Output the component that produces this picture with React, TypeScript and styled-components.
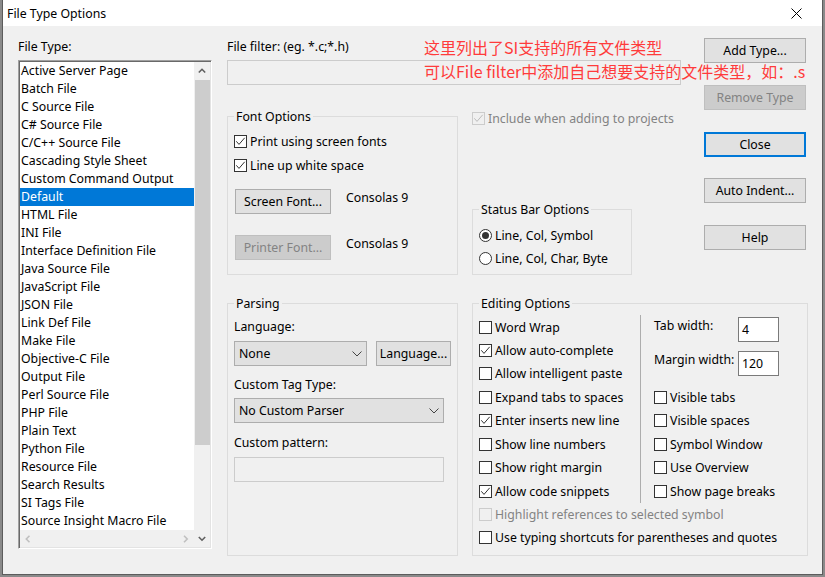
import React from "react";
import styled, {createGlobalStyle, css} from "styled-components";

const GlobalStyle = createGlobalStyle`
	html, body {
		margin: 0;
		padding: 0;
	}
	body {
		width: 825px;
		height: 577px;
		overflow: hidden;
		background: #8a8a8a;
		font-family: "Noto Sans", "Noto Sans CJK SC", sans-serif;
		font-size: 12.3px;
		line-height: 17px;
		color: #000;
	}
	* {
		box-sizing: border-box;
	}
`;

const fileTypes = [
	"Active Server Page",
	"Batch File",
	"C Source File",
	"C# Source File",
	"C/C++ Source File",
	"Cascading Style Sheet",
	"Custom Command Output",
	"Default",
	"HTML File",
	"INI File",
	"Interface Definition File",
	"Java Source File",
	"JavaScript File",
	"JSON File",
	"Link Def File",
	"Make File",
	"Objective-C File",
	"Output File",
	"Perl Source File",
	"PHP File",
	"Plain Text",
	"Python File",
	"Resource File",
	"Search Results",
	"SI Tags File",
	"Source Insight Macro File",
];

const Window = styled.div`
	position: relative;
	margin-left: 2px;
	width: 821px;
	height: 575px;
	background: #f0f0f0;
	border: 1px solid #5c5c5c;
	border-top: none;
	display: flex;
	flex-direction: column;
`;

const TitleBar = styled.div`
	height: 26px;
	flex: none;
	background: #fff;
	display: flex;
	align-items: center;
	justify-content: space-between;
	padding: 0 20px 0 4px;
`;

const Body = styled.div`
	display: flex;
	padding: 12px 0 0 15px;
`;

const Annotation = styled.div`
	position: absolute;
	left: 421px;
	top: 35px;
	font-family: "Noto Sans CJK SC", sans-serif;
	font-size: 16px;
	line-height: 24px;
	color: #ff3b3b;
	white-space: nowrap;
	pointer-events: none;
`;

const ListColumn = styled.div`
	width: 194px;
	flex: none;
	display: flex;
	flex-direction: column;
`;

const Label = styled.div<{$mt?: number}>`
	height: 17px;
	white-space: nowrap;
	margin-top: ${p => p.$mt ?? 0}px;
`;

const ListBox = styled.div`
	margin-top: 5px;
	height: 489px;
	border-top: 1px solid #a0a0a0;
	border-left: 1px solid #a0a0a0;
	border-right: 1px solid #fff;
	border-bottom: 1px solid #fff;
	padding: 1px;
	box-shadow: inset 1px 1px 0 #696969, inset -1px -1px 0 #e3e3e3;
	display: grid;
	grid-template-columns: 174px 16px;
	grid-template-rows: 468px 17px;
`;

const Items = styled.div`
	background: #fff;
	overflow: hidden;
`;

const Item = styled.div<{$selected?: boolean}>`
	height: 18px;
	line-height: 18px;
	padding-left: 1px;
	white-space: nowrap;
	background: ${p => (p.$selected ? "#0078d7" : "transparent")};
	color: ${p => (p.$selected ? "#fff" : "#000")};
`;

const VScroll = styled.div`
	grid-column: 2;
	grid-row: 1 / 3;
	background: #f0f0f0;
	display: flex;
	flex-direction: column;
`;

const ArrowCell = styled.div`
	height: 17px;
	flex: none;
	display: flex;
	align-items: center;
	justify-content: center;
`;

const Thumb = styled.div`
	margin: 1px 0 0 1px;
	height: 365px;
	background: #cdcdcd;
`;

const HScroll = styled.div`
	background: #f0f0f0;
	display: flex;
	justify-content: space-between;
	padding: 0 5px;
`;

const MainColumn = styled.div`
	margin-left: 15px;
	display: flex;
	flex-direction: column;
`;

const TopSection = styled.div`
	display: flex;
`;

const TopContent = styled.div`
	width: 477px;
	display: flex;
	flex-direction: column;
`;

const TextBox = styled.div<{$width: number; $disabled?: boolean; $mt?: number}>`
	width: ${p => p.$width}px;
	height: 25px;
	margin-top: ${p => p.$mt ?? 0}px;
	padding-left: 3px;
	display: flex;
	align-items: center;
	${p =>
		p.$disabled
			? css`
					background: #f0f0f0;
					border: 1px solid #cccccc;
			  `
			: css`
					background: #fff;
					border: 1px solid #7a7a7a;
			  `}
`;

const OptionsRow = styled.div`
	display: flex;
	margin-top: 23px;
`;

const Group = styled.fieldset<{$width: number; $pt: number; $pb: number}>`
	margin: 0;
	min-width: 0;
	width: ${p => p.$width}px;
	padding: ${p => p.$pt}px 6px ${p => p.$pb}px 6px;
	border: 1px solid #dcdcdc;
`;

const Legend = styled.legend`
	padding: 0 2px;
	height: 17px;
	line-height: 17px;
`;

const ColumnB = styled.div`
	margin-left: 14px;
	width: 232px;
	display: flex;
	flex-direction: column;
`;

const CheckRow = styled.div<{$h: number; $disabled?: boolean; $mt?: number}>`
	height: ${p => p.$h}px;
	margin-top: ${p => p.$mt ?? 0}px;
	display: flex;
	align-items: center;
	gap: 3px;
	white-space: nowrap;
	color: ${p => (p.$disabled ? "#838383" : "#000")};
`;

const Box = styled.span<{$disabled?: boolean}>`
	width: 13px;
	height: 13px;
	flex: none;
	border: 1px solid ${p => (p.$disabled ? "#cccccc" : "#333333")};
	background: ${p => (p.$disabled ? "#f0f0f0" : "#fff")};
	display: flex;
	align-items: center;
	justify-content: center;
`;

const RadioCircle = styled.span`
	width: 13px;
	height: 13px;
	flex: none;
	border: 1px solid #333;
	border-radius: 50%;
	background: #fff;
	display: flex;
	align-items: center;
	justify-content: center;
`;

const RadioDot = styled.span`
	width: 7px;
	height: 7px;
	border-radius: 50%;
	background: #333;
`;

const FontRow = styled.div<{$mt: number}>`
	display: flex;
	align-items: flex-start;
	gap: 15px;
	margin-top: ${p => p.$mt}px;
	padding-left: 1px;
`;

const Button = styled.div<{$width: number; $disabled?: boolean; $default?: boolean}>`
	width: ${p => p.$width}px;
	height: 25px;
	flex: none;
	display: flex;
	align-items: center;
	justify-content: center;
	white-space: nowrap;
	background: #e1e1e1;
	border: 1px solid #adadad;
	${p =>
		p.$disabled &&
		css`
			background: #cccccc;
			border-color: #bfbfbf;
			color: #838383;
		`}
	${p =>
		p.$default &&
		css`
			border: 2px solid #0078d7;
		`}
`;

const ButtonColumn = styled.div`
	width: 102px;
	display: flex;
	flex-direction: column;
	gap: 21.75px;
`;

const BottomSection = styled.div`
	display: flex;
	gap: 14px;
	margin-top: 19.5px;
`;

const SelectRow = styled.div<{$mt: number}>`
	display: flex;
	gap: 9px;
	margin-top: ${p => p.$mt}px;
`;

const Select = styled.div<{$width: number}>`
	width: ${p => p.$width}px;
	height: 25px;
	background: #e1e1e1;
	border: 1px solid #adadad;
	display: flex;
	align-items: center;
	justify-content: space-between;
	padding: 0 4px 0 4px;
	white-space: nowrap;
`;

const EditGrid = styled.div`
	display: grid;
	grid-template-columns: 161px 14px 147px;
	grid-template-rows: repeat(10, 23.44px);
`;

const Separator = styled.div`
	grid-column: 2;
	grid-row: 1 / 9;
	border-left: 1px solid #adadad;
`;

const Cell = styled.div<{$col: string; $row: string}>`
	grid-column: ${p => p.$col};
	grid-row: ${p => p.$row};
`;

const WidthFields = styled.div`
	grid-column: 3;
	grid-row: 1 / 4;
	display: flex;
	flex-direction: column;
	gap: 9px;
	padding-top: 1.7px;
`;

const FieldRow = styled.div`
	display: flex;
	align-items: flex-start;
`;

const FieldLabel = styled.span`
	width: 84px;
	white-space: nowrap;
`;

function Chevron({dir, color}: {dir: "up" | "down" | "left" | "right"; color: string}) {
	const pts = {
		up: "0.8,4.5 4,1.3 7.2,4.5",
		down: "0.8,1 4,4.2 7.2,1",
		left: "4.5,0.8 1.3,4 4.5,7.2",
		right: "1,0.8 4.2,4 1,7.2",
	}[dir];
	const horiz = dir === "left" || dir === "right";
	return (
		<svg width={horiz ? 6 : 8} height={horiz ? 8 : 6} viewBox={horiz ? "0 0 6 8" : "0 0 8 6"}>
			<polyline points={pts} fill="none" stroke={color} strokeWidth="1.6" />
		</svg>
	);
}

function DropArrow() {
	return (
		<svg width="10" height="6" viewBox="0 0 10 6">
			<polyline points="0.5,0.5 5,5 9.5,0.5" fill="none" stroke="#444" strokeWidth="1" />
		</svg>
	);
}

function CloseIcon() {
	return (
		<svg width="11" height="11" viewBox="0 0 11 11">
			<path d="M0.5 0.5 L10.5 10.5 M10.5 0.5 L0.5 10.5" stroke="#000" strokeWidth="1" />
		</svg>
	);
}

function Check({
	label,
	checked,
	disabled,
	h = 24,
	mt,
}: {
	label: string;
	checked?: boolean;
	disabled?: boolean;
	h?: number;
	mt?: number;
}) {
	return (
		<CheckRow $h={h} $disabled={disabled} $mt={mt}>
			<Box $disabled={disabled}>
				{checked && (
					<svg width="11" height="11" viewBox="0 0 11 11">
						<polyline
							points="1.3,5.3 4,8.4 9.7,1.8"
							fill="none"
							stroke={disabled ? "#bcbcbc" : "#333"}
							strokeWidth="1"
						/>
					</svg>
				)}
			</Box>
			<span>{label}</span>
		</CheckRow>
	);
}

function Radio({label, selected}: {label: string; selected?: boolean}) {
	return (
		<CheckRow $h={23}>
			<RadioCircle>{selected && <RadioDot />}</RadioCircle>
			<span>{label}</span>
		</CheckRow>
	);
}

const leftEdit: [string, boolean][] = [
	["Word Wrap", false],
	["Allow auto-complete", true],
	["Allow intelligent paste", false],
	["Expand tabs to spaces", false],
	["Enter inserts new line", true],
	["Show line numbers", false],
	["Show right margin", false],
	["Allow code snippets", true],
];

const rightEdit = ["Visible tabs", "Visible spaces", "Symbol Window", "Use Overview", "Show page breaks"];

export default function App() {
	return (
		<>
			<GlobalStyle />
			<Window>
				<TitleBar>
					<span>File Type Options</span>
					<CloseIcon />
				</TitleBar>
				<Body>
					<ListColumn>
						<Label>File Type:</Label>
						<ListBox>
							<Items>
								{fileTypes.map((t, i) => (
									<Item key={t} $selected={i === 7}>
										{t}
									</Item>
								))}
							</Items>
							<VScroll>
								<ArrowCell>
									<Chevron dir="up" color="#606060" />
								</ArrowCell>
								<Thumb />
								<div style={{flex: 1}} />
								<ArrowCell>
									<Chevron dir="down" color="#606060" />
								</ArrowCell>
							</VScroll>
							<HScroll>
								<ArrowCell>
									<Chevron dir="left" color="#c0c0c0" />
								</ArrowCell>
								<ArrowCell>
									<Chevron dir="right" color="#c0c0c0" />
								</ArrowCell>
							</HScroll>
						</ListBox>
					</ListColumn>

					<MainColumn>
						<TopSection>
							<TopContent>
								<Label>File filter: (eg. *.c;*.h)</Label>
								<TextBox $width={454} $disabled $mt={5} />
								<OptionsRow>
									<Group $width={231} $pt={4} $pb={14}>
										<Legend>Font Options</Legend>
										<Check label="Print using screen fonts" checked />
										<Check label="Line up white space" checked />
										<FontRow $mt={12}>
											<Button $width={96}>Screen Font...</Button>
											<span>Consolas 9</span>
										</FontRow>
										<FontRow $mt={21}>
											<Button $width={96} $disabled>
												Printer Font...
											</Button>
											<span>Consolas 9</span>
										</FontRow>
									</Group>
									<ColumnB>
										<Check label="Include when adding to projects" checked disabled h={20} />
										<Group $width={160} $pt={6} $pb={4.5} style={{marginTop: 72.5}}>
											<Legend>Status Bar Options</Legend>
											<Radio label="Line, Col, Symbol" selected />
											<Radio label="Line, Col, Char, Byte" />
										</Group>
									</ColumnB>
								</OptionsRow>
							</TopContent>
							<ButtonColumn>
								<Button $width={102}>Add Type...</Button>
								<Button $width={102} $disabled>
									Remove Type
								</Button>
								<Button $width={102} $default>
									Close
								</Button>
								<Button $width={102}>Auto Indent...</Button>
								<Button $width={102}>Help</Button>
							</ButtonColumn>
						</TopSection>

						<BottomSection>
							<Group $width={231} $pt={6} $pb={0}>
								<Legend>Parsing</Legend>
								<Label>Language:</Label>
								<SelectRow $mt={6.5}>
									<Select $width={133}>
										<span>None</span>
										<DropArrow />
									</Select>
									<Button $width={75}>Language...</Button>
								</SelectRow>
								<Label $mt={9.5}>Custom Tag Type:</Label>
								<SelectRow $mt={5.5}>
									<Select $width={210}>
										<span>No Custom Parser</span>
										<DropArrow />
									</Select>
								</SelectRow>
								<Label $mt={10.5}>Custom pattern:</Label>
								<TextBox $width={210} $disabled $mt={6.5} />
							</Group>

							<Group $width={336} $pt={3.8} $pb={5.3}>
								<Legend>Editing Options</Legend>
								<EditGrid>
									{leftEdit.map(([label, checked], i) => (
										<Cell key={label} $col="1" $row={`${i + 1}`}>
											<Check label={label} checked={checked} h={23.44} />
										</Cell>
									))}
									<Separator />
									<WidthFields>
										<FieldRow>
											<FieldLabel>Tab width:</FieldLabel>
											<TextBox $width={41}>4</TextBox>
										</FieldRow>
										<FieldRow>
											<FieldLabel>Margin width:</FieldLabel>
											<TextBox $width={41}>120</TextBox>
										</FieldRow>
									</WidthFields>
									{rightEdit.map((label, i) => (
										<Cell key={label} $col="3" $row={`${i + 4}`}>
											<Check label={label} h={23.44} />
										</Cell>
									))}
									<Cell $col="1 / -1" $row="9">
										<Check label="Highlight references to selected symbol" disabled h={23.44} />
									</Cell>
									<Cell $col="1 / -1" $row="10">
										<Check label="Use typing shortcuts for parentheses and quotes" h={23.44} />
									</Cell>
								</EditGrid>
							</Group>
						</BottomSection>
					</MainColumn>
				</Body>
				<Annotation>
					这里列出了SI支持的所有文件类型
					<br />
					可以File filter中添加自己想要支持的文件类型，如：.s
				</Annotation>
			</Window>
		</>
	);
}
